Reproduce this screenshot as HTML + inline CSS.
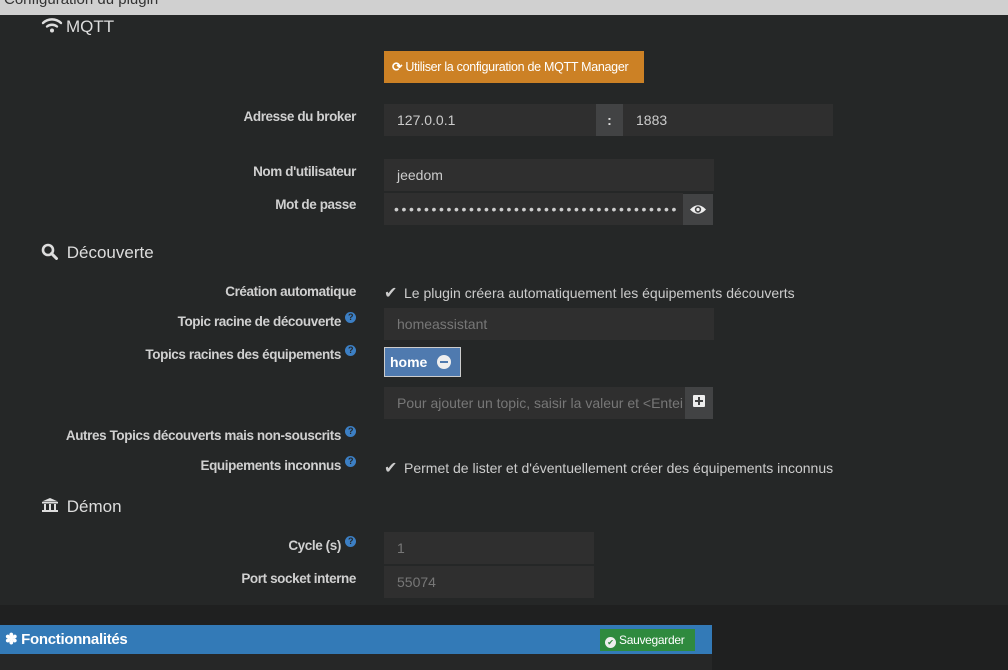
<!DOCTYPE html>
<html><head><meta charset="utf-8"><style>
*{margin:0;padding:0;box-sizing:border-box}
body{width:1008px;height:670px;overflow:hidden;background:#252727;font-family:"Liberation Sans",sans-serif;position:relative;color:#ccc}
.a{position:absolute;white-space:nowrap}
.lbl{position:absolute;right:652px;font-size:13.5px;font-weight:bold;color:#d0d0d0;letter-spacing:-0.4px}
.q{display:inline-block;width:11px;height:11px;border-radius:50%;background:#3c7fc4;color:#252727;font-size:9px;line-height:11px;text-align:center;font-weight:bold;vertical-align:top;margin-left:4px;margin-top:-2px}
.in{position:absolute;background:#2f2f2f;font-size:14px;color:#ccc;padding-left:13px;line-height:32px}
.h{position:absolute;font-size:17px;color:#ddd}
.ph{color:#777}
.ck{display:inline-block;width:16px;font-size:16px;color:#ccc;margin-right:4px}
</style></head><body>
<div class="a" style="left:0;top:0;width:1008px;height:15px;background:#d0d0d0;overflow:hidden"><div style="position:absolute;left:4px;top:-9px;font-size:15px;color:#333">Configuration du plugin</div></div>

<div class="h" style="left:41px;top:17px"><svg width="22" height="16" viewBox="0 0 22 16" style="vertical-align:-1px;margin-right:3px"><path d="M2 6 A13 13 0 0 1 20 6" stroke="#ddd" stroke-width="2.4" fill="none" stroke-linecap="round"/><path d="M6 9.5 A8 8 0 0 1 16 9.5" stroke="#ddd" stroke-width="2.4" fill="none" stroke-linecap="round"/><circle cx="11" cy="13.5" r="2" fill="#ddd"/></svg>MQTT</div>

<div class="a" style="left:384px;top:51px;width:260px;height:32px;background:#cc8125;color:#fff;font-size:12.5px;line-height:32px;padding-left:8px;letter-spacing:-0.3px"><span style="font-weight:bold">⟳</span> Utiliser la configuration de MQTT Manager</div>

<div class="lbl" style="top:109px">Adresse du broker</div>
<div class="in" style="left:384px;top:104px;width:212px">127.0.0.1</div>
<div class="a" style="left:596px;top:104px;width:27px;height:32px;background:#424344;color:#ddd;text-align:center;line-height:32px;font-size:14px;font-weight:bold">:</div>
<div class="in" style="left:623px;top:104px;width:210px">1883</div>

<div class="lbl" style="top:164px">Nom d'utilisateur</div>
<div class="in" style="left:384px;top:159px;width:330px">jeedom</div>
<div class="lbl" style="top:197px">Mot de passe</div>
<div class="in" style="left:384px;top:193px;width:299px;overflow:hidden;font-size:14px;letter-spacing:2.6px;padding-left:10px">••••••••••••••••••••••••••••••••••••••</div>
<div class="a" style="left:683px;top:194px;width:30px;height:31px;background:#424344"><svg width="30" height="31" viewBox="0 0 30 31"><path d="M7 15.5 Q15 7 23 15.5 Q15 24 7 15.5Z" fill="#eee"/><circle cx="15" cy="15.5" r="3.2" fill="#424344"/><circle cx="15" cy="15.5" r="1.6" fill="#eee"/></svg></div>

<div class="h" style="left:41px;top:243px"><svg width="18" height="17" viewBox="0 0 18 17" style="vertical-align:-2px;margin-right:3px"><circle cx="7" cy="7" r="5" stroke="#ddd" stroke-width="2.6" fill="none"/><path d="M10.5 10.5 L15.5 15.5" stroke="#ddd" stroke-width="3" stroke-linecap="round"/></svg> Découverte</div>

<div class="lbl" style="top:284px">Création automatique</div>
<div class="a" style="left:384px;top:283px;font-size:14px;color:#ccc"><span class="ck">✔</span>Le plugin créera automatiquement les équipements découverts</div>
<div class="lbl" style="top:314px">Topic racine de découverte<span class="q">?</span></div>
<div class="in ph" style="left:384px;top:308px;width:330px">homeassistant</div>
<div class="lbl" style="top:347px">Topics racines des équipements<span class="q">?</span></div>
<div class="a" style="left:384px;top:347px;width:77px;height:30px;background:#4f7aaf;border:1px solid #ccc;color:#fff;font-weight:bold;font-size:14px;line-height:28px;padding-left:5px">home <span style="display:inline-block;width:14px;height:14px;border-radius:50%;background:#eee;vertical-align:-2px;margin-left:6px;position:relative"><span style="position:absolute;left:3px;top:6px;width:8px;height:2px;background:#4f7aaf"></span></span></div>
<div class="in ph" style="left:384px;top:387px;width:301px;overflow:hidden">Pour ajouter un topic, saisir la valeur et &lt;Entei</div>
<div class="a" style="left:685px;top:387px;width:28px;height:32px;background:#424344"><div style="position:absolute;left:8px;top:8px;width:12px;height:12px;background:#eee;border-radius:1px"></div><div style="position:absolute;left:10px;top:13px;width:8px;height:2px;background:#424344"></div><div style="position:absolute;left:13px;top:10px;width:2px;height:8px;background:#424344"></div></div>
<div class="lbl" style="top:428px">Autres Topics découverts mais non-souscrits<span class="q">?</span></div>
<div class="lbl" style="top:458px">Equipements inconnus<span class="q">?</span></div>
<div class="a" style="left:384px;top:458px;font-size:14px;color:#ccc"><span class="ck">✔</span>Permet de lister et d'éventuellement créer des équipements inconnus</div>

<div class="h" style="left:41px;top:497px"><svg width="18" height="16" viewBox="0 0 18 16" style="vertical-align:-1px;margin-right:3px"><path d="M9 1 L17 4.5 L1 4.5Z" fill="#ddd"/><rect x="1" y="5" width="16" height="1.5" fill="#ddd"/><rect x="3" y="7" width="2" height="6" fill="#ddd"/><rect x="8" y="7" width="2" height="6" fill="#ddd"/><rect x="13" y="7" width="2" height="6" fill="#ddd"/><rect x="1" y="13" width="16" height="2" fill="#ddd"/></svg> Démon</div>

<div class="lbl" style="top:538px">Cycle (s)<span class="q">?</span></div>
<div class="in ph" style="left:384px;top:532px;width:210px">1</div>
<div class="lbl" style="top:571px">Port socket interne</div>
<div class="in ph" style="left:384px;top:566px;width:210px">55074</div>

<div class="a" style="left:0;top:605px;width:1008px;height:65px;background:#1f2020"></div>
<div class="a" style="left:0;top:625px;width:712px;height:29px;background:#337ab7;color:#fff;font-size:15px;font-weight:bold;line-height:29px;padding-left:5px;letter-spacing:-0.3px">✽ Fonctionnalités</div>
<div class="a" style="left:600px;top:629px;width:95px;height:22px;background:#2f8a3e;color:#fff;font-size:12px;line-height:22px;padding-left:5px;letter-spacing:-0.3px"><span style="display:inline-block;width:11px;height:11px;border-radius:50%;background:#eee;color:#2f8a3e;font-size:8px;line-height:11px;text-align:center;vertical-align:-1px">✔</span> Sauvegarder</div>
<div class="a" style="left:0;top:654px;width:712px;height:16px;background:#262727"></div>
</body></html>
